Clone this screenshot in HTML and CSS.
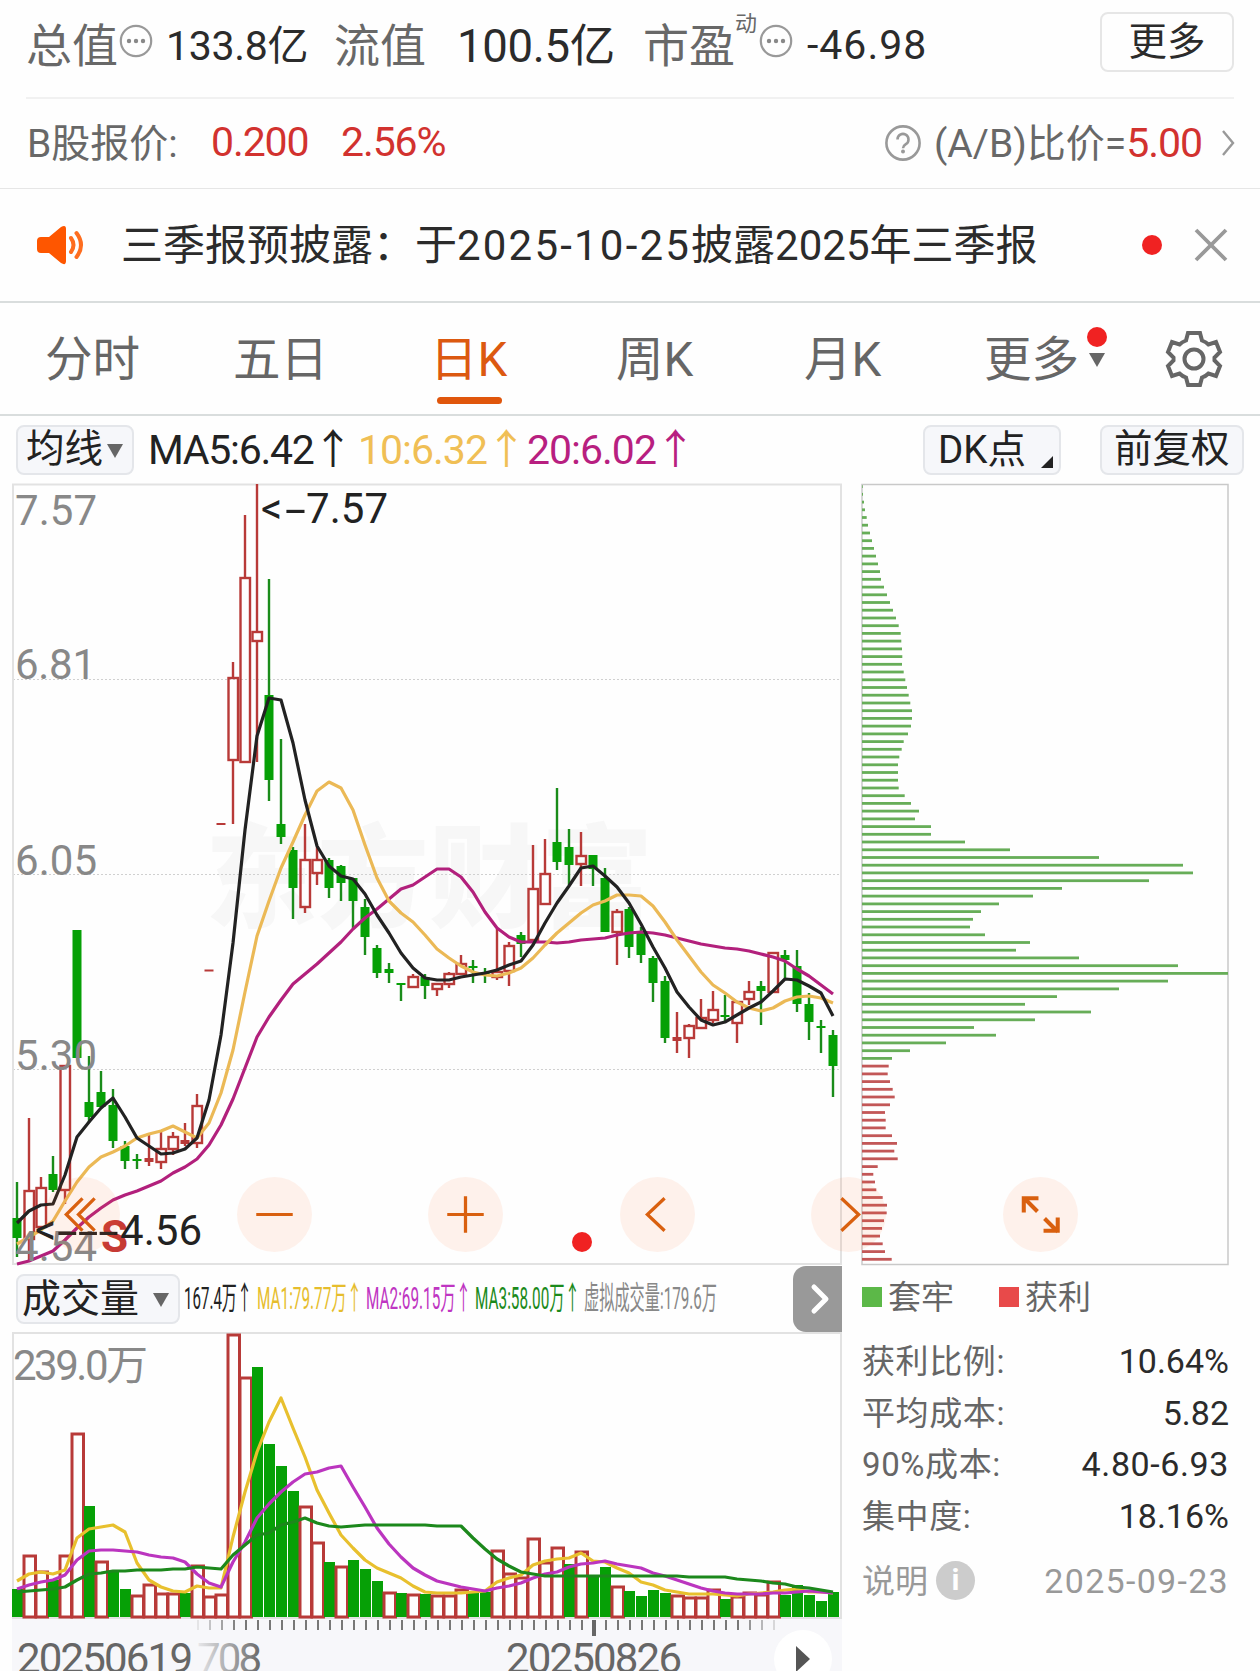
FILE: index.html
```html
<!DOCTYPE html>
<html lang="zh-CN">
<head>
<meta charset="utf-8">
<title>日K</title>
<link rel="stylesheet" href="styles.css">
</head>

<body>
<div class="stats">
	<span class="label">总值</span>
	<svg class="more-icon" viewBox="0 0 34 34"><circle cx="17" cy="17" r="15.2"/><g class="dots"><circle cx="10" cy="17" r="2.2"/><circle cx="17" cy="17" r="2.2"/><circle cx="24" cy="17" r="2.2"/></g></svg>
	<span class="value">133.8亿</span>
	<span class="label">流值</span>
	<span class="value big">100.5亿</span>
	<span class="label">市盈</span>
	<span class="sup">动</span>
	<svg class="more-icon" viewBox="0 0 34 34"><circle cx="17" cy="17" r="15.2"/><g class="dots"><circle cx="10" cy="17" r="2.2"/><circle cx="17" cy="17" r="2.2"/><circle cx="24" cy="17" r="2.2"/></g></svg>
	<span class="value dashed">-46.98</span>
	<button class="more-btn">更多</button>
</div>

<div class="bshare">
	<span class="b-label">B股报价:</span>
	<span class="red">0.200</span>
	<span class="red">2.56%</span>
	<svg class="help" viewBox="0 0 38 38"><circle cx="19" cy="19" r="16.6"/><path d="M13.5 15.5a5.5 5.5 0 1 1 8.3 4.7c-2 1.300-2.800 2-2.800 4"/><circle class="fill" cx="19" cy="27.500" r="2"/></svg>
	<span class="ratio">(A/B)比价=<b class="red">5.00</b></span>
	<svg class="chev" viewBox="0 0 16 30"><path d="M2 3l10 12-10 12"/></svg>
</div>

<div class="notice">
	<svg class="horn" viewBox="0 0 50 42"><path class="body" d="M4 13h8L24 3q5-3 5 2v32q0 5-5 2L12 29H4q-4 0-4-4v-8q0-4 4-4z"/><path class="wave" d="M34 14q5 7 0 14M39.500 9q9 12 0 24"/></svg>
	<span class="notice-text">三季报预披露：于<span class="date">2025-10-25</span>披露2025年三季报</span>
	<i class="dot"></i>
	<svg class="close" viewBox="0 0 36 36"><path d="M3 3l30 30M33 3L3 33"/></svg>
</div>

<div class="tabs">
	<span>分时</span>
	<span>五日</span>
	<span class="active">日K</span>
	<span>周K</span>
	<span>月K</span>
	<span class="tab-more">更多<i class="dot"></i><i class="tri"></i></span>
	<svg class="gear" viewBox="-30 -30 60 60"><path d="M-6-26H6L8-18.500Q12-17 14.500-14.500L22-17 26-7 20.500-1.500V1.500L26 7 22 17 14.500 14.500Q12 17 8 18.500L6 26H-6L-8 18.500Q-12 17-14.500 14.500L-22 17-26 7-20.500 1.500V-1.500L-26-7-22-17-14.500-14.500Q-12-17-8-18.500z"/><circle r="9.500"/></svg>
</div>

<div class="toolbar">
	<span class="pill ma-pill">均线<i class="tri"></i></span>
	<span class="ma ma5">MA5:6.42<em>↑</em></span>
	<span class="ma ma10">10:6.32<em>↑</em></span>
	<span class="ma ma20">20:6.02<em>↑</em></span>
	<span class="pill dk-pill">DK点<i class="corner"></i></span>
	<span class="pill fq-pill">前复权</span>
</div>

<div class="main">
	<div class="left">
		<svg id="kline" class="kline" viewBox="12 484 830 782"></svg>

		<div class="vol-head">
			<span class="pill vol-pill">成交量<i class="tri"></i></span>
			<svg class="vol-text" viewBox="180 1266 613 66">
				<text x="184" y="1309" textLength="68" lengthAdjust="spacingAndGlyphs" fill="#222">167.4万↑</text>
				<text x="257" y="1309" textLength="105" lengthAdjust="spacingAndGlyphs" fill="#e6bd2c">MA1:79.77万↑</text>
				<text x="366" y="1309" textLength="105" lengthAdjust="spacingAndGlyphs" fill="#bf35c2">MA2:69.15万↑</text>
				<text x="475" y="1309" textLength="105" lengthAdjust="spacingAndGlyphs" fill="#1b8a1b">MA3:58.00万↑</text>
				<text x="584" y="1309" textLength="133" lengthAdjust="spacingAndGlyphs" fill="#888">虚拟成交量:179.6万</text>
			</svg>
			<span class="next"><svg viewBox="0 0 20 32"><path d="M4 4l12 12L4 28"/></svg></span>
		</div>

		<svg id="volume" class="volume" viewBox="12 1332 830 287"></svg>
		<svg id="axis" class="axis" viewBox="12 1619 830 52"></svg>
	</div>

	<div class="right">
		<svg id="chips" class="chips" viewBox="861 484 369 782"></svg>
		<div class="legend">
			<i class="sq green"></i><span>套牢</span>
			<i class="sq redsq"></i><span>获利</span>
		</div>
		<div class="row"><span>获利比例:</span><b>10.64%</b></div>
		<div class="row"><span>平均成本:</span><b>5.82</b></div>
		<div class="row"><span>90%成本:</span><b class="range">4.80-6.93</b></div>
		<div class="row"><span>集中度:</span><b>18.16%</b></div>
		<div class="row note"><span>说明</span><i class="info">i</i><b>2025-09-23</b></div>
	</div>

	<!-- floating chart controls -->
	<span class="ctl c1"><svg viewBox="-37 -37 74 74"><path d="M0-16L-16 0 0 16M12-16L-4 0 12 16"/></svg></span>
	<span class="ctl c2"><svg viewBox="-37 -37 74 74"><path d="M-18 0H18"/></svg></span>
	<span class="ctl c3"><svg viewBox="-37 -37 74 74"><path d="M-18 0H18M0-18V18"/></svg></span>
	<span class="ctl c4"><svg viewBox="-37 -37 74 74"><path d="M7-16L-10 0 7 16"/></svg></span>
	<span class="ctl c5"><svg viewBox="-37 -37 74 74"><path d="M-7-16L10 0-7 16"/></svg></span>
	<span class="ctl c6"><svg viewBox="-37 -37 74 74"><path d="M-2-16H-16.500V-2M-16-16L-3-3M3 16H17V3M17 17L4 4"/></svg></span>
	<i class="dot chart-dot"></i>
</div>

<script src="script.js"></script>
</body>
</html>
```
FILE: styles.css
```css
body { margin: 0; width: 1260px; height: 1671px; overflow: hidden; background: #fefefe; color: #2b2b2b; font-family: Roboto, "Noto Sans CJK SC", sans-serif; }
* { box-sizing: border-box; }
svg { display: block; overflow: visible; fill: none; }
span { white-space: nowrap; }
b { font-weight: normal; }
i { display: block; font-style: normal; }
em { font-style: normal; }
.red { color: #d2322f; }
.dot { width: 20px; height: 20px; border-radius: 50%; background: #f02222; }
.tri { width: 0; height: 0; border: 8px solid transparent; border-top: 14px solid #666; border-bottom: 0; }

.stats { display: grid; grid-template-columns: 93px 47px 168px 123px 186px 92px 24px 46px 295px 134px; align-items: center; height: 99px; margin: 0 26px; border-bottom: 2px solid #f1f1f1; padding-bottom: 10px; }
.label { font-size: 46px; color: #686868; padding-bottom: 4px; }
.value { font-size: 41px; letter-spacing: -0.3px; padding-bottom: 4px; }
.value.big { font-size: 45.5px; }
.value.dashed { letter-spacing: 1px; padding: 0 0 0 2px; position: relative; top: 1px; }
.sup { font-size: 22px; color: #686868; padding-bottom: 46px; }
.more-icon { width: 34px; height: 34px; margin-bottom: 6px; stroke: #999; stroke-width: 2.2; }
.dots { fill: #888; stroke: none; }
.more-btn { height: 60px; margin: 0 0 3px; padding: 0; border: 2px solid #e6e6e6; border-radius: 8px; background: #fefefe; color: #2b2b2b; font: 38.5px/1 Roboto, "Noto Sans CJK SC", sans-serif; }

.bshare { display: grid; grid-template-columns: 183px 130px 544px 50px 286px 20px; align-items: center; height: 90px; padding-left: 27px; padding-bottom: 2px; border-bottom: 1px solid #e6e6e6; font-size: 41px; letter-spacing: -1.1px; }
.b-label, .ratio { color: #686868; font-size: 39px; padding-bottom: 5px; letter-spacing: 0; }
.bshare > .red { padding-bottom: 1px; padding-left: 1px; }
.ratio .red { font-size: 41px; letter-spacing: -1px; }
.help { width: 38px; height: 38px; stroke: #999; stroke-width: 2.6; }
.help .fill { fill: #999; stroke: none; }
.chev { width: 16px; height: 30px; margin-left: 1px; stroke: #999; stroke-width: 2.4; }

.notice { display: grid; grid-template-columns: 84px 1021px 51px 40px; align-items: center; height: 114px; padding-left: 37px; border-bottom: 2px solid #d9dddd; font-size: 42px; }
.notice-text { padding-bottom: 7px; }
.date { letter-spacing: 2.2px; }
.horn { width: 50px; height: 42px; }
.horn .body { fill: #fe5600; }
.horn .wave { stroke: #fe6d1f; stroke-width: 4; stroke-linecap: round; }
.close { width: 36px; height: 36px; stroke: #999; stroke-width: 3.8; }

.tabs { display: grid; grid-template-columns: 188px 197px 186px 188px 180px 181px 60px; align-items: center; height: 113px; padding-left: 45px; border-bottom: 2px solid #d9dddd; font-size: 47.5px; color: #666; }
.tabs span { position: relative; padding-bottom: 6px; }
.tabs .active { color: #dc5910; }
.active::after { content: ""; position: absolute; left: 7px; bottom: -8px; width: 65px; height: 7px; border-radius: 4px; background: #e0560c; }
.tab-more .dot { position: absolute; left: 103px; top: 6px; }
.tab-more .tri { position: absolute; left: 105px; top: 32px; }
.gear { width: 60px; height: 60px; margin-left: -1px; stroke: #666; stroke-width: 4; }

.toolbar { display: grid; grid-template-columns: 132px 210px 169px 396px 177px 144px; align-items: center; height: 68px; padding-left: 16px; padding-bottom: 1px; }
.pill { display: flex; align-items: center; height: 50px; border: 2px solid #e4e6ea; border-radius: 8px; background: #f6f7fa; color: #222; font-size: 38.5px; line-height: 46px; padding-bottom: 2px; position: relative; }
.ma-pill { width: 118px; padding-left: 8px; }
.ma-pill .tri, .vol-pill .tri { margin: 3px 0 0 4px; }
.dk-pill { width: 138px; padding: 0 0 1px 13px; }
.fq-pill { padding-left: 12px; font-size: 38.5px; }
.corner { position: absolute; right: 6px; bottom: 5px; border-left: 12px solid transparent; border-bottom: 12px solid #222; }
.ma { font-size: 41px; letter-spacing: -1px; padding-bottom: 8px; }
.ma em { margin-left: -1px; }
.ma5 { color: #222; letter-spacing: -1.3px; }
.ma10 { color: #f0bf55; }
.ma20 { color: #b81f80; }

.main { position: relative; display: flex; padding-left: 12px; gap: 19px; }
.left { width: 830px; }
.kline { width: 830px; height: 782px; }
.vol-head { display: flex; align-items: center; height: 66px; }
.vol-pill { width: 164px; margin-left: 4px; padding-left: 4px; padding-bottom: 1px; font-size: 39px; }
.vol-pill .tri { margin-left: 14px; }
.vol-text { width: 613px; height: 66px; font-size: 32px; }
.next { display: flex; align-items: center; width: 49px; height: 66px; padding-left: 17px; border-radius: 13px 0 0 13px; background: #999; }
.next svg { width: 20px; height: 32px; stroke: #fff; stroke-width: 5; stroke-linecap: round; stroke-linejoin: round; }
.volume { width: 830px; height: 287px; }
.axis { width: 830px; height: 52px; background: #f7f7fa; }

.right { width: 369px; }
.chips { width: 369px; height: 782px; }
.legend { display: flex; align-items: center; height: 62px; padding-left: 1px; font-size: 33px; color: #666; }
.legend span { padding-bottom: 4px; margin-left: -1px; }
.sq { width: 20px; height: 20px; margin-right: 7px; }
.sq.green { background: #5cb848; }
.sq.redsq { background: #e84a4a; margin-left: 45px; }
.row { display: flex; align-items: center; height: 51.800px; padding: 0 1px 0 1px; font-size: 33px; color: #666; }
.row span { letter-spacing: 0.6px; padding-bottom: 2px; }
.row:nth-child(3) { margin-top: 6px; }
.row b { margin-left: auto; margin-top: 2px; font-size: 34px; color: #2b2b2b; }
.row .range { letter-spacing: 0.6px; }
.row.note { margin-top: 13px; color: #999; }
.row.note span { letter-spacing: 0; }
.row.note b { color: #999; letter-spacing: 1.300px; }
.info { width: 39px; height: 39px; margin-left: 8px; border-radius: 50%; background: #ccc; color: #fff; font-size: 30px; font-weight: bold; line-height: 38px; text-align: center; }

.ctl { position: absolute; top: 693px; width: 75px; height: 75px; border-radius: 50%; background: rgba(255, 115, 45, 0.09); }
.ctl svg { width: 75px; height: 75px; stroke: #d9600f; stroke-width: 3.2; }
.c1 { left: 45px; }
.c2 { left: 237px; }
.c3 { left: 428px; }
.c4 { left: 620px; }
.c5 { left: 811px; }
.c6 { left: 1003px; }
.c6 svg { stroke-width: 4; }
.chart-dot { position: absolute; left: 572px; top: 748px; }

.frame { stroke: #e2e2e2; stroke-width: 2; }
.grid { stroke: #d0d0d0; stroke-width: 1; stroke-dasharray: 2 2; }
.up { stroke: #b83a38; stroke-width: 2.4; }
.up-fill { fill: #b83a38; }
.down { stroke: #1a8c1a; stroke-width: 2.4; }
.down-fill { fill: #06a006; }
.line { stroke-width: 3.2; stroke-linejoin: round; }
.tick { stroke: #777; stroke-width: 2; }
.water { fill: #f7f7f7; font-size: 112px; font-weight: 900; }
.price { fill: #888; font-size: 42px; }
.mark { fill: #222; font-size: 42px; }
.sell { fill: #c63a34; font-size: 44px; font-weight: bold; }
.day { fill: #666; font-size: 42px; }
```
FILE: script.js
```js
// x of candle i
function cx(i) { return 17 + 12 * i; }

// [type, high, body top, body bottom, low]; r = hollow, f = filled red, g = green
var candles = [
	['g',1182,1218,1238,1257],['r',1118,1190,1239,1261],['r',1177,1187,1227,1227],['g',1156,1174,1190,1192],
	['r',1065,1065,1190,1204],['g',930,930,1058,1058],['g',1056,1102,1117,1123],['g',1071,1092,1107,1107],
	['g',1089,1105,1141,1148],['g',1141,1146,1161,1169],['g',1154,1159,1161,1169],['f',1134,1158,1162,1166],
	['r',1132,1148,1162,1169],['r',1132,1136,1149,1155],['f',1123,1140,1144,1146],['r',1094,1105,1143,1148],
	['f',970.500,969.500,971.500,970.500],['f',824,823,825,824],['r',662,677,760,824],['r',515,577,762,762],
	['r',484,631,641,762],['g',579,695,780,801],['g',739,824,837,844],['g',847,850,888,919],
	['r',824,859,907,913],['r',847,859,873,885],['g',858,860,888,898],['g',865,866,883,901],
	['g',878,878,901,928],['g',899,907,937,955],['g',945,948,973,978],['g',963,969,973,983],
	['g',983,983,985,1001],['r',974,976,987,988],['g',974,977,986,999],['r',983,983,989,996],
	['r',972,973,984,988],['r',955,963,974,974],['g',960,966,968,983],['g',968,972,974,983],
	['r',929,971,977,980],['r',942,945,971,986],['g',932,935,944,957],['r',845,888,940,940],
	['r',839,873,904,904],['g',788,842,862,870],['g',829,847,865,885],['r',832,855,864,886],
	['g',855,855,869,886],['g',868,878,932,932],['r',909,911,932,965],['g',907,909,947,958],
	['g',927,931,955,963],['g',956,958,983,1002],['g',976,981,1038,1043],['f',1012,1037,1041,1053],
	['r',1024,1025,1038,1058],['r',999,1017,1028,1028],['r',991,1009,1020,1023],['g',995,1015,1017,1022],
	['r',1001,1001,1023,1043],['r',981,991,999,1005],['g',981,986,991,1025],['r',952,952,992,992],
	['g',950,955,960,978],['g',950,966,1004,1012],['g',993,1004,1022,1040],['g',1020,1026,1028,1053],
	['g',1030,1035,1066,1097]
];

var ma5 = [1223,1211,1205,1204,1175,1137,1122,1108,1098,1117,1138,1146,1154,1153,1149,1138,1100,1035,943,830,736,698,700,743,800,846,866,876,879,894,915,933,953,968,978,980,980,977,975,973,970,965,961,945,923,903,886,868,866,876,887,903,924,947,968,992,1007,1020,1025,1022,1015,1008,1002,991,979,980,986,993,1016];
var ma10 = [1244,1237,1230,1221,1201,1182,1167,1157,1152,1146,1138,1134,1131,1126,1132,1138,1123,1093,1050,992,936,901,868,842,815,791,782,788,810,845,878,901,913,922,935,949,958,966,972,975,976,973,968,958,945,933,923,913,905,901,895,895,896,906,922,940,956,972,985,993,1002,1008,1011,1008,1001,997,996,998,1003];
var ma20 = [1264,1261,1256,1251,1240,1228,1217,1208,1200,1195,1191,1186,1181,1173,1167,1159,1145,1125,1099,1068,1037,1017,1000,984,974,964,953,942,929,918,909,899,889,885,877,869,869,877,892,912,928,937,942,942,942,943,942,940,939,938,935,933,932,933,935,938,941,944,946,948,949,951,954,957,961,969,976,985,994];

// tops of the volume bars
var vols = [1589,1555,1571,1580,1555,1433,1506,1561,1572,1589,1595,1584,1593,1593,1593,1565,1596,1594,1334,1377,1367,1444,1466,1491,1506,1542,1562,1566,1560,1569,1581,1592,1593,1594,1594,1595,1595,1589,1593,1592,1550,1573,1577,1538,1562,1547,1564,1551,1575,1567,1586,1591,1596,1590,1593,1595,1597,1597,1589,1599,1596,1592,1594,1581,1595,1585,1595,1601,1592];
var volColors = 'grrgrrgrggrrrrgrrrrrggggrrgrgggrgrgrrrggrrrrrrgrggrggggrrrrgrrrrggggg';
var vma1 = [1581,1574,1572,1574,1570,1538,1529,1527,1525,1532,1563,1580,1587,1591,1592,1586,1588,1588,1537,1492,1452,1422,1398,1428,1457,1490,1513,1535,1548,1560,1568,1573,1578,1586,1592,1593,1593,1593,1592,1591,1582,1578,1575,1565,1561,1559,1558,1553,1561,1562,1568,1573,1582,1585,1590,1592,1594,1594,1594,1595,1596,1594,1593,1592,1590,1589,1592,1592,1593];
var vma2 = [1589,1585,1582,1580,1575,1560,1551,1550,1550,1551,1552,1555,1557,1558,1562,1574,1583,1587,1562,1542,1518,1504,1492,1482,1474,1472,1468,1466,1487,1507,1528,1544,1557,1568,1575,1581,1584,1587,1589,1591,1588,1586,1583,1578,1574,1572,1567,1564,1563,1561,1564,1566,1568,1573,1576,1580,1584,1588,1591,1593,1594,1594,1594,1593,1593,1592,1591,1592,1593];
var vma3 = [1592,1591,1590,1589,1587,1580,1574,1573,1571,1571,1570,1570,1570,1569,1569,1567,1568,1569,1555,1545,1535,1533,1525,1522,1518,1523,1526,1527,1526,1525,1525,1525,1525,1525,1525,1526,1526,1526,1538,1549,1559,1566,1572,1574,1576,1576,1576,1576,1576,1576,1576,1576,1576,1576,1576,1576,1577,1577,1577,1577,1579,1580,1581,1583,1584,1587,1588,1590,1592];

// chip distribution, bar lengths from the highest price down
var chips = [0.7,1,2,3,4.7,6,8,10,12,14,16,18,19,22,25,28,31,34,36.7,38.7,39.3,40,40.3,40,41.7,43.3,45,46.7,48.3,50,50,49,46,41.7,39.7,37.3,36,36,36,36.7,42.7,49,57,53,69,69,103,148,237,321,331,287,200,171,137,119,111,108,123,168,154,217,316,366,306,257,195,163,229,173,112,134,84,48,30,
	26.7,25.7,28,30.7,32.7,28,23,23.7,23.7,30,35,32.3,35.7,15.7,11.3,13,14.3,20.7,25,24.7,22,20,18,20.7,23,29.7];

function line(values, color) {
	var pts = values.map(function (y, i) { return cx(i) + ',' + y; });
	return '<polyline class="line" stroke="' + color + '" points="' + pts.join(' ') + '"/>';
}
function rect(cls, x, y, w, h) {
	return '<rect class="' + cls + '" x="' + x + '" y="' + y + '" width="' + w + '" height="' + h + '"/>';
}
function text(cls, x, y, s, len, stretch) {
	return '<text class="' + cls + '" x="' + x + '" y="' + y + '"' + (len ? ' textLength="' + len + '"' : '') + (stretch ? ' lengthAdjust="spacingAndGlyphs"' : '') + '>' + s + '</text>';
}
function seg(cls, x1, y1, x2, y2) {
	return '<path class="' + cls + '" d="M' + x1 + ' ' + y1 + 'L' + x2 + ' ' + y2 + '"/>';
}

function drawKline() {
	var s = text('water', 205, 919, '东方财富', 448);
	[679.5, 874.5, 1069.5].forEach(function (y) { s += seg('grid', 13, y, 841, y); });
	s += rect('frame', 13, 484.500, 828, 779.5);
	candles.forEach(function (c, i) {
		var x = cx(i);
		if (c[0] == 'r') {
			s += seg('up', x, c[1], x, c[2]) + seg('up', x, c[3], x, c[4]);
			s += rect('up', x - 4.500, c[2] + 1, 9.500, Math.max(c[3] - c[2] - 1, 4));
		} else {
			var k = c[0] == 'f' ? 'up' : 'down';
			s += seg(k, x, c[1], x, c[4]) + rect(k + '-fill', x - 4.500, c[2], 9, c[3] - c[2]);
		}
	});
	s += line(ma20, '#b2207c') + line(ma10, '#ebb956') + line(ma5, '#222');
	s += text('price', 15, 525, '7.57', 82) + text('price', 15, 679, '6.81', 81);
	s += text('price', 15, 875, '6.05', 82) + text('price', 15, 1070, '5.30', 82);
	s += text('price', 15, 1261, '4.54', 82);
	s += text('mark', 261, 523, '&lt;') + text('mark', 285, 524, '-', 21, true) + text('mark', 306, 523, '7.57', 82);
	s += text('sell', 101, 1252, 'S');
	s += text('mark', 35, 1244, '&lt;') + text('mark', 57, 1246, '---', 62, true) + text('mark', 120, 1245, '4.56', 82);
	document.getElementById('kline').innerHTML = s;
}

function drawVolume() {
	var s = rect('frame', 13, 1333, 828, 285);
	vols.forEach(function (y, i) {
		var x = cx(i);
		if (volColors[i] == 'g') s += rect('down-fill', x - 5, y, 11, 1617 - y);
		else s += '<rect x="' + (x - 5) + '" y="' + (y + 1) + '" width="11.500" height="' + (1616 - y) + '" stroke="#b83a38" stroke-width="3"/>';
	});
	s += line(vma1, '#e8c02e') + line(vma2, '#bb35bf') + line(vma3, '#1c881c');
	s += text('price', 13, 1380, '239.0万', 135);
	document.getElementById('volume').innerHTML = s;
}

function drawAxis() {
	var s = '<defs><linearGradient id="fade"><stop offset="0" stop-color="#666" stop-opacity="0.1"/><stop offset="1" stop-color="#666"/></linearGradient></defs>';
	for (var i = 0; i < 49; i++) {
		var x = 198 + 12 * i;
		var o = i < 4 ? 0.15 + i * 0.25 : i > 45 ? (49 - i) * 0.25 : 1;
		s += '<path class="tick" opacity="' + o + '" d="M' + x + ' 1620V1630"/>';
	}
	s += '<path stroke="#666" stroke-width="4" d="M594 1620V1636"/>';
	s += text('day', 17, 1673, '20250619', 176);
	s += '<text class="day" x="197" y="1673" textLength="65" style="fill:url(#fade)">708</text>';
	s += text('day', 506, 1673, '20250826', 176);
	s += '<circle cx="803" cy="1659" r="29" fill="#fff"/><path fill="#555" d="M796 1646l14 13-14 13z"/>';
	document.getElementById('axis').innerHTML = s;
}

function drawChips() {
	var s = '<rect x="862" y="484.500" width="366" height="780" stroke="#c9c9c9" stroke-width="1.500"/>';
	chips.forEach(function (w, i) {
		s += '<rect x="862" y="' + (485.2 + i * 7.727).toFixed(1) + '" width="' + w + '" height="2.800" fill="' + (i < 75 ? '#67ad58' : '#c25757') + '"/>';
	});
	document.getElementById('chips').innerHTML = s;
}

drawKline();
drawVolume();
drawAxis();
drawChips();
```
